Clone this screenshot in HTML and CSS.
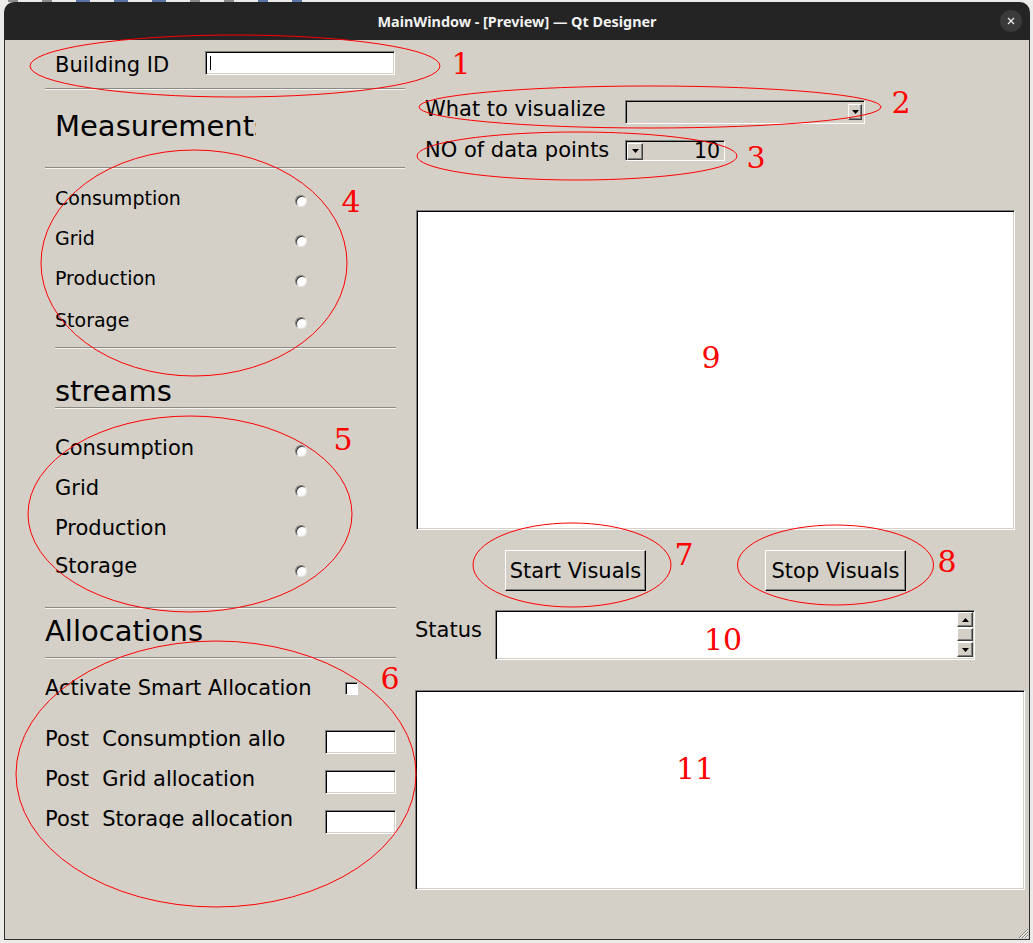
FILE: index.html
```html
<!DOCTYPE html>
<html>
<head>
<meta charset="utf-8">
<title>MainWindow - [Preview] — Qt Designer</title>
<link rel="stylesheet" href="styles.css">
</head>
<body>
<div class="desk">
  <span class="mk m1"></span><span class="mk m2"></span><span class="mk m3"></span><span class="mk m4"></span><span class="mk m5"></span><span class="mk m6"></span><span class="mk m7"></span><span class="mk m8"></span><span class="mk m9"></span>
</div>
<div class="window">
  <div class="titlebar">
    <span class="title">MainWindow - [Preview] — Qt Designer</span>
    <span class="close"><svg width="8" height="8" viewBox="0 0 8 8"><path d="M1 1L7 7M7 1L1 7" stroke="#e8e8e8" stroke-width="1.3"/></svg></span>
  </div>
  <div class="content">
    <div class="left">
      <div class="row-id">
        <span class="lbl lbl-id">Building ID</span>
        <span class="field field-id"><span class="caret"></span></span>
      </div>
      <div class="hr hr-full hr-1"></div>
      <div class="heading heading-meas">Measurements</div>
      <div class="hr hr-full"></div>
      <div class="radios radios-small">
        <div class="rrow"><span class="rl">Consumption</span><span class="radio"></span></div>
        <div class="rrow"><span class="rl">Grid</span><span class="radio"></span></div>
        <div class="rrow"><span class="rl">Production</span><span class="radio"></span></div>
        <div class="rrow rrow-last"><span class="rl">Storage</span><span class="radio"></span></div>
      </div>
      <div class="hr hr-inner hr-3"></div>
      <div class="heading heading-streams">streams</div>
      <div class="hr hr-inner"></div>
      <div class="radios radios-big">
        <div class="rrow"><span class="rl">Consumption</span><span class="radio"></span></div>
        <div class="rrow"><span class="rl">Grid</span><span class="radio"></span></div>
        <div class="rrow"><span class="rl">Production</span><span class="radio"></span></div>
        <div class="rrow rrow-last2"><span class="rl">Storage</span><span class="radio radio-low"></span></div>
      </div>
      <div class="hr hr-alloc hr-5"></div>
      <div class="heading heading-alloc">Allocations</div>
      <div class="hr hr-alloc"></div>
      <div class="row-check">
        <span class="lbl lbl-check">Activate Smart Allocation</span>
        <span class="checkbox"></span>
      </div>
      <div class="post-row post-first">
        <span class="post-lbl post-clip">Post  Consumption allocation</span>
        <span class="field field-post"></span>
      </div>
      <div class="post-row">
        <span class="post-lbl">Post  Grid allocation</span>
        <span class="field field-post"></span>
      </div>
      <div class="post-row">
        <span class="post-lbl">Post  Storage allocation</span>
        <span class="field field-post"></span>
      </div>
    </div>
    <div class="right">
      <div class="row-viz">
        <span class="lbl lbl-viz">What to visualize</span>
        <span class="combo"><span class="mini-btn combo-btn"><svg width="7" height="4" viewBox="0 0 7 4"><path d="M0 0H7L3.5 4Z" fill="#000"/></svg></span></span>
      </div>
      <div class="row-spin">
        <span class="lbl lbl-spin">NO of data points</span>
        <span class="spin"><span class="mini-btn spin-btn"><svg width="7" height="4" viewBox="0 0 7 4"><path d="M0 0H7L3.5 4Z" fill="#000"/></svg></span><span class="spin-val">10</span></span>
      </div>
      <div class="white-box box-plot"></div>
      <div class="btn-row">
        <span class="button">Start Visuals</span>
        <span class="button">Stop Visuals</span>
      </div>
      <div class="status-row">
        <span class="lbl lbl-status">Status</span>
        <div class="white-box box-status">
          <div class="status-text"></div>
          <div class="scrollbar">
            <span class="mini-btn sb-btn"><svg width="7" height="4" viewBox="0 0 7 4"><path d="M0 4H7L3.5 0Z" fill="#000"/></svg></span>
            <span class="mini-btn sb-thumb"></span>
            <span class="mini-btn sb-btn sb-down"><svg width="7" height="4" viewBox="0 0 7 4"><path d="M0 0H7L3.5 4Z" fill="#000"/></svg></span>
          </div>
        </div>
      </div>
      <div class="white-box box-log"></div>
    </div>
    <svg class="grip" width="10" height="10" viewBox="0 0 10 10">
      <path d="M10 1L1 10M10 4L4 10M10 7L7 10" stroke="#808080" stroke-width="1"/>
      <path d="M10 2L2 10M10 5L5 10M10 8L8 10" stroke="#fff" stroke-width="1"/>
    </svg>
  </div>
</div>
<svg class="annot" width="1033" height="943" viewBox="0 0 1033 943">
  <g fill="none" stroke="#ff0000" stroke-width="1">
    <ellipse cx="235" cy="66" rx="205" ry="31"/>
    <ellipse cx="650" cy="107" rx="231" ry="21"/>
    <ellipse cx="577" cy="156" rx="160" ry="24"/>
    <ellipse cx="194" cy="263" rx="153" ry="113"/>
    <ellipse cx="190" cy="514" rx="162" ry="98"/>
    <ellipse cx="216" cy="774" rx="200" ry="133"/>
    <ellipse cx="572" cy="565" rx="99" ry="42"/>
    <ellipse cx="835.5" cy="565" rx="98" ry="40"/>
  </g>
  <g class="annot-num" fill="#ff0000" text-anchor="middle">
    <text x="461" y="74">1</text>
    <text x="901" y="113">2</text>
    <text x="756" y="168">3</text>
    <text x="351" y="212">4</text>
    <text x="343" y="450">5</text>
    <text x="390" y="689">6</text>
    <text x="684" y="565">7</text>
    <text x="947" y="572">8</text>
    <text x="711" y="368">9</text>
    <text x="723" y="650">10</text>
    <text x="695" y="779">11</text>
  </g>
</svg>
</body>
</html>
```
FILE: styles.css
```css
* { box-sizing: border-box; }
html, body { margin: 0; padding: 0; }
body {
  width: 1033px;
  height: 943px;
  overflow: hidden;
  position: relative;
  background: #ecebe9;
  font-family: "DejaVu Sans", sans-serif;
  color: #000;
}
.desk { height: 2px; display: flex; gap: 24px; padding-left: 8px; overflow: visible; }
.mk { display: block; width: 10px; height: 2px; background: #8a8a8a; }
.m3, .m4, .m5 { background: #5a72a6; width: 14px; }
.m8, .m9 { background: #5a72a6; }

.window {
  margin-left: 4px;
  width: 1026px;
  height: 938px;
  display: flex;
  flex-direction: column;
  border-radius: 10px 10px 0 0;
  overflow: hidden;
}
.titlebar {
  height: 38px;
  flex: none;
  background: #242424;
  display: grid;
  grid-template-columns: 1fr auto 1fr;
  align-items: center;
}
.title {
  grid-column: 2;
  color: #f2f2f2;
  font-family: "Noto Sans", sans-serif;
  font-weight: 700;
  font-size: 14.4px;
  white-space: nowrap;
}
.close {
  grid-column: 3;
  justify-self: end;
  margin-right: 8px;
  width: 22px;
  height: 22px;
  border-radius: 50%;
  background: #3a3a3a;
  display: flex;
  align-items: center;
  justify-content: center;
}
.content {
  flex: 1;
  position: relative;
  background: #d4d0c8;
  border: 1px solid #2e2e2e;
  border-top: 0;
  display: flex;
  padding-left: 40px;
}

/* generic */
.lbl { font-size: 21px; white-space: nowrap; }
.hr { height: 2px; border-top: 1px solid #8b8983; border-bottom: 1px solid #f4f3f0; flex: none; }
.hr-full { width: 360px; }
.hr-inner { width: 341px; margin-left: 10px; }
.hr-alloc { width: 351px; }
.field {
  display: block;
  background: #fff;
  border: 1px solid;
  border-color: #808080 #fff #fff #808080;
  box-shadow: inset 1px 1px 0 #000, inset -1px -1px 0 #d4d0c8;
}
.mini-btn {
  display: flex;
  align-items: center;
  justify-content: center;
  background: #d4d0c8;
  border: 1px solid;
  border-color: #fff #404040 #404040 #fff;
  box-shadow: inset -1px -1px 0 #808080;
}

/* left column */
.left { width: 360px; display: flex; flex-direction: column; flex: none; }
.row-id { margin-top: 11px; height: 24px; display: flex; align-items: center; padding-left: 10px; }
.lbl-id { width: 150px; margin-top: 4px; }
.field-id { width: 190px; height: 24px; padding: 4px 0 0 4px; }
.caret { display: block; width: 1px; height: 14px; background: #000; }
.hr-1 { margin-top: 13px; }
.heading {
  font-size: 29px;
  line-height: 34px;
  height: 34px;
  white-space: nowrap;
  overflow: hidden;
  flex: none;
}
.heading-meas { width: 201px; margin: 19px 0 24px 10px; }
.heading-streams { margin: 26px 0 0 10px; height: 32px; line-height: 32px; }
.heading-alloc { margin: 5px 0 9px 0; }
.radios { display: flex; flex-direction: column; }
.radios-small { padding-top: 9px; font-size: 19px; }
.radios-big { padding-top: 19px; font-size: 21px; }
.rrow { height: 40px; display: flex; align-items: center; padding-left: 10px; }
.rl { width: 240px; white-space: nowrap; }
.rrow-last { margin-top: 2px; }
.rrow-last2 { margin-top: -2px; }
.radio {
  display: block;
  width: 12px;
  height: 12px;
  margin-top: 5px;
  border-radius: 50%;
  background: #fff;
  border: 1px solid;
  border-color: #7a7a7a #e8e6e2 #e8e6e2 #7a7a7a;
  box-shadow: inset 1px 1px 0 #333;
}
.radio-low { margin-top: 10px; }
.hr-3 { margin-top: 7px; }
.hr-5 { margin-top: 21px; }
.row-check { margin-top: 14px; height: 30px; display: flex; align-items: center; width: 351px; }
.lbl-check { width: 300px; }
.checkbox {
  display: block;
  width: 13px;
  height: 13px;
  background: #fff;
  border: 1px solid;
  border-color: #808080 #fff #fff #808080;
  box-shadow: inset 1px 1px 0 #000;
}
.post-row { margin-top: 16px; height: 24px; display: flex; align-items: flex-start; width: 351px; }
.post-first { margin-top: 27px; }
.post-lbl {
  font-size: 21px;
  line-height: 18px;
  height: 18px;
  white-space: pre;
  overflow: hidden;
  width: 280px;
}
.post-clip { width: 241px; }
.field-post { width: 71px; height: 24px; margin-left: auto; }

/* right column */
.right { margin-left: 10px; width: 610px; display: flex; flex-direction: column; flex: none; }
.row-viz { margin-top: 60px; height: 24px; display: flex; align-items: center; padding-left: 10px; }
.lbl-viz { width: 200px; margin-bottom: 6px; }
.combo {
  width: 240px;
  height: 24px;
  display: flex;
  align-items: center;
  justify-content: flex-end;
  padding-right: 2px;
  background: #d4d0c8;
  border: 1px solid;
  border-color: #808080 #fff #fff #808080;
  box-shadow: inset 1px 1px 0 #000, inset -1px -1px 0 #d4d0c8;
}
.combo-btn { width: 14px; height: 16px; }
.row-spin { margin-top: 16px; height: 21px; display: flex; align-items: center; padding-left: 10px; }
.lbl-spin { width: 200px; margin-bottom: 2px; }
.spin {
  width: 100px;
  height: 21px;
  display: flex;
  align-items: center;
  padding: 1px 4px 0 1px;
  background: #d4d0c8;
  border: 1px solid;
  border-color: #808080 #fff #fff #808080;
  box-shadow: inset 1px 1px 0 #000, inset -1px -1px 0 #d4d0c8;
}
.spin-btn { width: 16px; height: 17px; flex: none; }
.spin-val { margin-left: auto; font-size: 20.5px; line-height: 19px; }
.white-box {
  background: #fff;
  border: 1px solid;
  border-color: #808080 #fff #fff #808080;
  box-shadow: inset 1px 1px 0 #000, inset -1px -1px 0 #d4d0c8;
  flex: none;
}
.box-plot { margin: 49px 0 0 1px; width: 599px; height: 320px; }
.btn-row { margin-top: 20px; height: 41px; display: flex; gap: 119px; padding-left: 90px; }
.button {
  width: 141px;
  height: 41px;
  display: flex;
  align-items: center;
  justify-content: center;
  font-size: 21px;
  white-space: nowrap;
  background: #d4d0c8;
  border: 1px solid;
  border-color: #fff #000 #000 #fff;
  box-shadow: inset -1px -1px 0 #808080;
}
.status-row { margin-top: 19px; height: 50px; display: flex; align-items: flex-start; }
.lbl-status { width: 80px; margin-top: 8px; line-height: 24px; }
.box-status { width: 480px; height: 50px; display: flex; padding: 1px 1px 1px 1px; }
.status-text { flex: 1; }
.scrollbar { width: 16px; display: flex; flex-direction: column; gap: 1px; }
.sb-btn { height: 15px; }
.sb-thumb { height: 13px; }
.sb-down { height: 15px; }
.box-log { margin-top: 30px; width: 610px; height: 200px; }

.grip { position: absolute; right: 1px; bottom: 1px; }

.annot { position: absolute; left: 0; top: 0; pointer-events: none; }
.annot-num { font-family: "DejaVu Serif", serif; font-size: 30px; }
```
